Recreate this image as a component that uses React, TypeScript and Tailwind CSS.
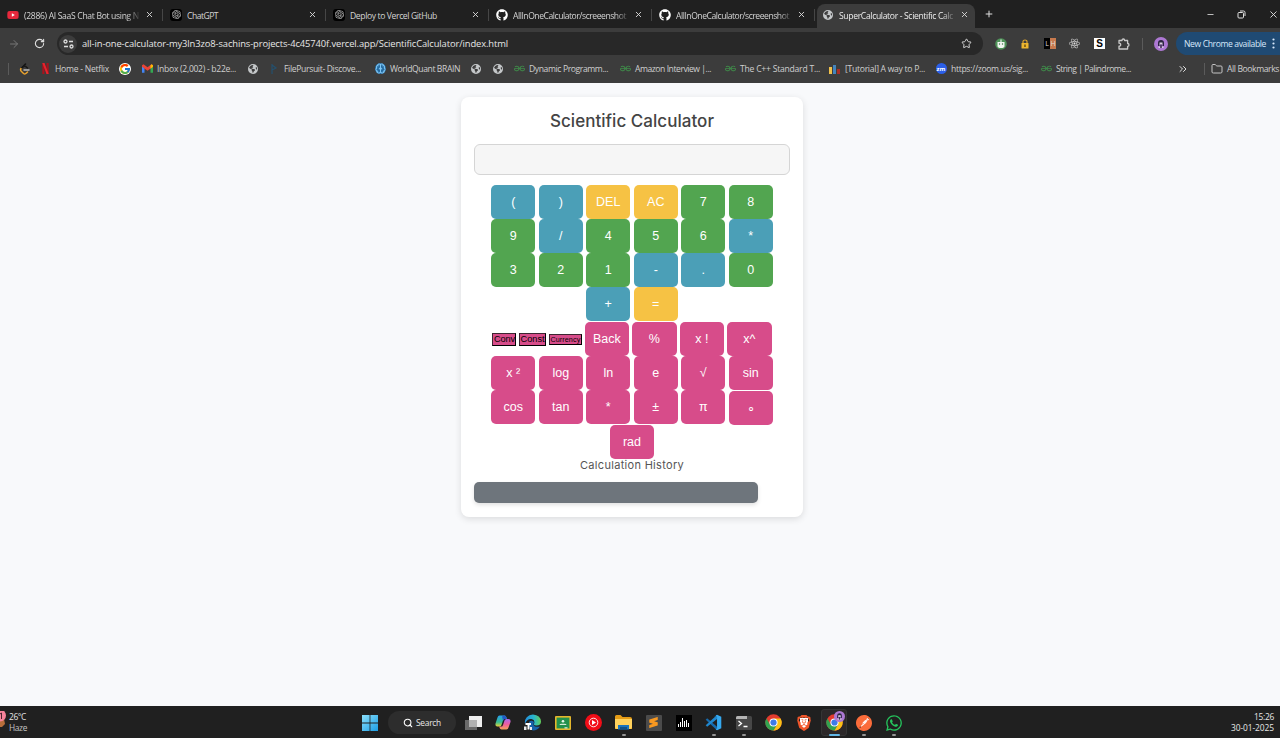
import { useLayoutEffect, useRef, useState, type ReactNode } from "react";
import { FcGoogle } from "react-icons/fc";
import { FaReact, FaGithub, FaEarthAmericas, FaWhatsapp, FaYoutube } from "react-icons/fa6";
import { SiBrave, SiGeeksforgeeks, SiOpenai, SiPostman, SiSublimetext } from "react-icons/si";
import { ChevronsRight, Folder, Minus, Plus, RotateCw, Search, Star, X, ArrowRight, Brain } from "lucide-react";

/* Single-line text whose letter spacing is tuned so that it spans `w` pixels. */
function Fit({ w, className, children }: { w: number; className?: string; children: string }) {
  const ref = useRef<HTMLSpanElement>(null);
  const [spacing, setSpacing] = useState(0);
  useLayoutEffect(() => {
    const el = ref.current;
    if (el) setSpacing((w - el.getBoundingClientRect().width) / children.length);
  }, [w, children]);
  return (
    <span ref={ref} className={`inline-block shrink-0 whitespace-pre ${className ?? ""}`} style={{ letterSpacing: `${spacing}px` }}>
      {children}
    </span>
  );
}

const Globe = () => (
  <span className="flex size-[10px] items-center justify-center rounded-full bg-[#3c3c3c] text-[#c4c7c9]">
    <FaEarthAmericas size={10} />
  </span>
);

const Gpt = () => (
  <span className="flex size-[12px] items-center justify-center rounded-[3px] bg-black text-[#c9c9c9]">
    <SiOpenai size={9} />
  </span>
);

const YouTube = () => (
  <span className="relative flex size-3 items-center justify-center text-[#e8283c]">
    <span className="absolute size-1 bg-white" />
    <FaYoutube size={12} className="relative" />
  </span>
);

type TabData = { icon: ReactNode; title: string; w: number; active?: boolean };

const tabs: TabData[] = [
  { icon: <YouTube />, title: "(2886) AI SaaS Chat Bot using N", w: 115 },
  { icon: <Gpt />, title: "ChatGPT", w: 31 },
  { icon: <Gpt />, title: "Deploy to Vercel GitHub", w: 87 },
  { icon: <FaGithub size={12} className="text-white" />, title: "AllInOneCalculator/screeenshot", w: 113 },
  { icon: <FaGithub size={12} className="text-white" />, title: "AllInOneCalculator/screeenshot", w: 113 },
  { icon: <Globe />, title: "SuperCalculator - Scientific Calc", w: 114, active: true },
];

function Tab({ icon, title, w, active }: TabData) {
  return (
    <div className={`flex h-6 shrink-0 items-center pb-[1px] ${active ? "mr-1 ml-[2px] w-[158px] rounded-t-lg bg-[#3c3c3c] pl-[5px]" : "w-[163px] pl-[7px]"}`}>
      <span className="flex w-[12px] justify-center pb-[2px]">{icon}</span>
      <span className={`ml-[5px] w-[117px] overflow-hidden pb-[2px] ${w > 100 ? "[mask-image:linear-gradient(to_right,black_88%,transparent)]" : ""}`}>
        <Fit w={w} className={`text-[8.6px] ${active ? "text-[#ececec]" : "text-[#d4d4d4]"}`}>{title}</Fit>
      </span>
      <X size={9} strokeWidth={2.4} className="mb-[3px] ml-[4px] text-[#dddddd]" />
      {!active && <span className="mb-[2px] ml-auto h-3 w-px bg-[#464646]" />}
    </div>
  );
}

const LeetCode = () => (
  <svg width="11" height="12" viewBox="0 0 22 24" fill="none" strokeLinecap="round" strokeWidth="3">
    <path d="M13 2 4 11" stroke="#111" />
    <path d="M4 11q-2 3 1 6l4 4q3 2 6-1l2-2" stroke="#eaa32c" />
    <path d="m8 8 3-2q2 0 6 4" stroke="#171717" />
    <path d="M10 14h10" stroke="#bbb" />
  </svg>
);

const Netflix = () => (
  <svg width="7" height="11" viewBox="0 0 7 12">
    <path d="M0 0h2.4v12H0zM4.6 0H7v12H4.6z" fill="#a5141d" />
    <path d="M0 0h2.4L7 12H4.6z" fill="#e9222c" />
  </svg>
);

const Gmail = () => (
  <svg width="11" height="9" viewBox="0 0 22 17">
    <path d="M0 2v15h5V7z" fill="#4285f4" />
    <path d="M22 2v15h-5V7z" fill="#34a853" />
    <path d="m0 2 3-2 8 6 8-6 3 2v3l-11 8L0 5z" fill="#ea4335" />
    <path d="m17 2 2-2 3 2v3l-5 4z" fill="#fbbc04" />
  </svg>
);

const FilePursuit = () => (
  <svg width="8" height="10" viewBox="0 0 8 10" fill="none" stroke="#24506e" strokeWidth="1.2">
    <path d="M2 0v10M2 1l4 3-4 2" />
  </svg>
);

const Bars = () => (
  <span className="flex h-[10px] w-3 items-end gap-px">
    <span className="h-[7px] w-[3px] bg-[#f0c04a]" />
    <span className="h-[9px] w-[3px] bg-[#4384bd]" />
    <span className="h-[5px] w-[3px] bg-[#a72e27]" />
  </span>
);

const World = () => (
  <span className="flex size-[11px] items-center justify-center rounded-full bg-[#24699f] text-[#7cc4f3]">
    <Brain size={11} strokeWidth={2.2} />
  </span>
);

const Zoom = () => (
  <span className="flex size-[11px] items-center justify-center rounded-full bg-[#2b5fe8] text-[6px] font-bold text-white">zm</span>
);

const Gfg = () => <SiGeeksforgeeks size={11} className="text-[#3f8a49]" />;

const bookmarks: { icon: ReactNode; text?: string; w?: number; box: string }[] = [
  { icon: <LeetCode />, box: "w-[21px]" },
  { icon: <Netflix />, text: "Home - Netflix", w: 54, box: "w-[80px]" },
  { icon: <FcGoogle size={12} className="rounded-full bg-white" />, box: "w-[22px]" },
  { icon: <Gmail />, text: "Inbox (2,002) - b22e...", w: 79, box: "w-[106px]" },
  { icon: <Globe />, box: "w-[21px]" },
  { icon: <FilePursuit />, text: "FilePursuit- Discove...", w: 77, box: "w-[106px]" },
  { icon: <World />, text: "WorldQuant BRAIN", w: 70, box: "w-[96px]" },
  { icon: <Globe />, box: "w-[22px]" },
  { icon: <Globe />, box: "w-[21px]" },
  { icon: <Gfg />, text: "Dynamic Programm...", w: 79, box: "w-[106px]" },
  { icon: <Gfg />, text: "Amazon Interview |...", w: 76, box: "w-[105px]" },
  { icon: <Gfg />, text: "The C++ Standard T...", w: 80, box: "w-[105px]" },
  { icon: <Bars />, text: "[Tutorial] A way to P...", w: 80, box: "w-[106px]" },
  { icon: <Zoom />, text: "https://zoom.us/sig...", w: 77, box: "w-[105px]" },
  { icon: <Gfg />, text: "String | Palindrome...", w: 75, box: "w-[138px]" },
];

const Avatar = ({ small }: { small?: boolean }) => (
  <svg width={small ? 11 : 14} height={small ? 11 : 14} viewBox="0 0 14 14">
    <circle cx="7" cy="7" r="7" fill="#ad78d3" />
    <path d="M4 9V6q0-3 3-3t3 3v3H8.500V7h-3v2z" fill="#2b2440" />
    <path d="M5.5 5.500h3v2h-3zM4.500 9.500h5V11h-5z" fill="#d9d0e0" />
    <path d="M6.200 7.500h1.600V11H6.200z" fill="#3d2f50" />
  </svg>
);

function Browser() {
  return (
    <header className="bg-[#3c3c3c] text-[#dfdfdf]">
      <div className="flex h-7 items-end bg-[#202020]">
        {tabs.map((t, i) => <Tab key={i} {...t} />)}
        <div className="flex h-7 flex-1 items-center pl-[5px]">
          <Plus size={10} strokeWidth={2.4} />
          <span className="flex-1" />
          <Minus size={9} strokeWidth={2.2} className="mr-[22px]" />
          <svg width="9" height="9" viewBox="0 0 9 9" fill="none" stroke="currentColor" className="mr-[22px]">
            <rect x="1" y="2.500" width="5.500" height="5.500" rx="1" /><path d="M3 1h3.500Q8 1 8 2.500V6" />
          </svg>
          <X size={11} strokeWidth={2} className="mr-[1px]" />
        </div>
      </div>
      <div className="mt-[3px] flex h-[25px] items-center">
        <ArrowRight size={12} className="ml-2 text-[#777777]" />
        <RotateCw size={11} strokeWidth={2.4} className="ml-[14px]" />
        <div className="ml-3 flex h-[23px] w-[926px] items-center rounded-full bg-[#282828] pl-[2px] pr-[11px]">
          <span className="flex size-[18px] items-center justify-center rounded-full bg-[#3c3c3c]">
            <svg width="11" height="10" viewBox="0 0 11 10" fill="none" stroke="#dedede" strokeWidth="1.3">
              <circle cx="2.5" cy="2.5" r="1.5" /><path d="M6 2.5h4M1 7.5h4" /><circle cx="8.5" cy="7.5" r="1.5" />
            </svg>
          </span>
          <Fit w={426} className="ml-[5px] text-[9.4px] text-[#e6e6e6]">all-in-one-calculator-my3ln3zo8-sachins-projects-4c45740f.vercel.app/ScientificCalculator/index.html</Fit>
          <Star size={11} strokeWidth={2} className="ml-auto" />
        </div>
        <span className="ml-[12px] flex size-3 items-center justify-center">
          <svg width="12" height="12" viewBox="0 0 12 12">
            <circle cx="6" cy="6" r="5.8" fill="#4f9359" />
            <path d="M2.5 4h7v4q0 2-3.5 2T2.5 8z" fill="#f1f6f1" />
            <path d="M6 1.5V4" stroke="#fff" /><circle cx="4.5" cy="6" r=".7" fill="#397442" /><circle cx="7.5" cy="6" r=".7" fill="#397442" />
          </svg>
        </span>
        <svg width="8" height="10" viewBox="0 0 8 10" className="ml-[14px]">
          <path d="M2 4V2.500Q2 1 4 1t2 1.500V4" fill="none" stroke="#e0a52b" strokeWidth="1.200" />
          <rect x=".5" y="4" width="7" height="5.500" rx=".6" fill="#edb52f" /><path d="M3.400 5.500h1.200v2.500H3.400z" fill="#4a3508" />
        </svg>
        <span className="ml-[15px] flex h-[11px] w-3 text-center text-[7px] leading-[11px]">
          <span className="w-1/2 bg-black">L</span><span className="w-1/2 bg-[#c87a4e]">H</span>
        </span>
        <FaReact size={11} className="ml-[13px]" />
        <span className="ml-[14px] size-[11px] bg-white text-center font-['Liberation_Sans'] text-[10px] font-bold leading-[11px] text-black">S</span>
        <svg width="12" height="12" viewBox="0 0 12 12" fill="none" stroke="#c9c9c9" strokeWidth="1.300" strokeLinejoin="round" className="ml-[13px]">
          <path d="M1 2.500h3Q4 1 5.300 1t1.300 1.500h3v3Q11 5.500 11 6.900T9.600 8.300V11H1V8.200q1.700 0 1.700-1.500T1 5.200z" />
        </svg>
        <span className="ml-3 h-3 w-px bg-[#5b5b5b]" />
        <span className="ml-[11px]"><Avatar /></span>
        <div className="ml-[8px] flex h-[23px] flex-1 items-center rounded-l-full bg-[#1f4a73] pl-2 text-[#d7e8fb]">
          <Fit w={82} className="text-[8.6px]">New Chrome available</Fit>
          <svg width="3" height="11" viewBox="0 0 3 11" className="ml-[6px]" fill="currentColor">
            <circle cx="1.5" cy="1.5" r="1.1" /><circle cx="1.5" cy="5.5" r="1.1" /><circle cx="1.5" cy="9.5" r="1.1" />
          </svg>
        </div>
      </div>
      <div className="flex h-[27px] items-center pb-[2px]">
        <span className="ml-2 mr-[9px] h-3 w-px bg-[#5b5b5b]" />
        {bookmarks.map((b, i) => (
          <span key={i} className={`flex shrink-0 items-center gap-1 ${b.box}`}>
            <span className="flex w-3 shrink-0 justify-center">{b.icon}</span>
            {b.text && <Fit w={b.w!} className="text-[8.6px] text-[#cfcfcf]">{b.text}</Fit>}
          </span>
        ))}
        <ChevronsRight size={12} strokeWidth={2} className="-ml-px shrink-0" />
        <span className="ml-[15px] h-3 w-px shrink-0 bg-[#5b5b5b]" />
        <Folder size={12} strokeWidth={2} className="ml-[6px] shrink-0 text-[#c5c5c5]" />
        <Fit w={52} className="ml-1 text-[8.6px] text-[#cfcfcf]">All Bookmarks</Fit>
      </div>
    </header>
  );
}

type KeyColor = "b" | "y" | "g" | "p";
const keyBg: Record<KeyColor, string> = { b: "bg-[#4b9fb7]", y: "bg-[#f6c244]", g: "bg-[#52a550]", p: "bg-[#d74c8a]" };

function Key({ label, color }: { label: string; color: KeyColor }) {
  return (
    <button className={`h-[34px] w-[44.4px] rounded-[5px] font-['Liberation_Sans'] text-[12.5px] leading-[34px] text-white ${keyBg[color]} ${label === "∘" ? "mt-[0.8px]" : ""}`}>
      {label}
    </button>
  );
}

const upper: [string, KeyColor][][] = [
  [["(", "b"], [")", "b"], ["DEL", "y"], ["AC", "y"], ["7", "g"], ["8", "g"]],
  [["9", "g"], ["/", "b"], ["4", "g"], ["5", "g"], ["6", "g"], ["*", "b"]],
  [["3", "g"], ["2", "g"], ["1", "g"], ["-", "b"], [".", "b"], ["0", "g"]],
  [["+", "b"], ["=", "y"]],
];
const lower = [
  ["x ²", "log", "ln", "e", "√", "sin"],
  ["cos", "tan", "*", "±", "π", "∘"],
];

const Row = ({ children }: { children: ReactNode }) => <div className="flex h-[34.15px] justify-center gap-[3.1px]">{children}</div>;

const miniKey = "flex items-center justify-center overflow-hidden border border-r-[1.5px] border-b-[1.5px] border-t-[#3d2631] border-l-[#3d2631] border-r-black border-b-black bg-[#d74c8a] whitespace-nowrap text-black";

function Calculator() {
  return (
    <section className="mx-auto h-[420px] w-[342px] rounded-lg bg-white px-[13px] pt-[13px] shadow-[0_2px_7px_rgba(0,0,0,0.12)]">
      <h1 className="flex h-[22px] items-center justify-center font-[Inter] font-medium text-[#444444]">
        <Fit w={164} className="text-[17px]">Scientific Calculator</Fit>
      </h1>
      <div className="mt-3 h-[31px] rounded-[6px] border border-[#d5d5d5] bg-[#f6f6f6]" />
      <div className="mt-[10px]">
        {upper.map((row, i) => (
          <Row key={i}>{row.map(([label, color], j) => <Key key={j} label={label} color={color} />)}</Row>
        ))}
        <Row>
          <div className="mr-[-0.5px] flex items-center gap-[2.6px] pt-[2px] font-['Liberation_Sans']">
            <div className={`h-[13px] w-[24px] text-[9.2px] leading-[11px] ${miniKey}`}><Fit w={21}>Conv</Fit></div>
            <div className={`h-[13px] w-[27px] text-[9.2px] leading-[11px] ${miniKey}`}><Fit w={24}>Const</Fit></div>
            <div className={`h-[11px] w-[33.5px] text-[7.2px] leading-[9px] ${miniKey}`}><Fit w={30}>Currency</Fit></div>
          </div>
          {["Back", "%", "x !", "x^"].map((k) => <Key key={k} label={k} color="p" />)}
        </Row>
        {lower.map((row, i) => (
          <Row key={i}>{row.map((k, j) => <Key key={j} label={k} color="p" />)}</Row>
        ))}
        <div className="flex h-[35px] justify-center pt-[0.8px]"><Key label="rad" color="p" /></div>
      </div>
      <p className="relative flex h-[13px] items-center justify-center font-[Inter] text-[#555555]">
        <Fit w={104} className="text-[11px]">Calculation History</Fit>
      </p>
      <div className="mt-[10px] h-[21px] w-[284px] rounded-[5px] bg-[#6e757c] shadow-[0_2px_4px_rgba(0,0,0,0.12)]" />
    </section>
  );
}

const Chrome = () => (
  <svg width="17" height="17" viewBox="0 0 48 48">
    <circle cx="24" cy="24" r="23" fill="#e33b2e" />
    <path d="M4 12.5A23 23 0 0 0 24 47l10-17.5-20 0z" fill="#32a350" />
    <path d="M24 47a23 23 0 0 0 20-34.5H24L34 30z" fill="#fbc116" />
    <circle cx="24" cy="24" r="11.5" fill="#fff" /><circle cx="24" cy="24" r="8.8" fill="#3d7be8" />
  </svg>
);

const Windows = () => (
  <svg width="16" height="16" viewBox="0 0 16 16">
    <defs><linearGradient id="win" x2="1" y2="1"><stop stopColor="#8be0fb" /><stop offset="1" stopColor="#1c9de4" /></linearGradient></defs>
    <path d="M0 0h7.6v7.6H0zM8.4 0H16v7.6H8.4zM0 8.4h7.6V16H0zM8.4 8.4H16V16H8.4z" fill="url(#win)" />
  </svg>
);

const TaskView = () => (
  <svg width="17" height="16" viewBox="0 0 17 16">
    <path d="M4 1h13v11H4z" fill="#eeeeee" /><path d="M0 5h12v10H0z" fill="#777" fillOpacity=".85" />
    <path d="M4 5h8v7H4z" fill="#b1b1b1" />
  </svg>
);

const Copilot = () => (
  <svg width="16" height="15" viewBox="0 0 32 30">
    <defs>
      <linearGradient id="cpa" x2="0" y2="1"><stop stopColor="#279ef0" /><stop offset=".6" stopColor="#37bd91" /><stop offset="1" stopColor="#e8d33b" /></linearGradient>
      <linearGradient id="cpb" x2="0" y2="1"><stop stopColor="#a86af0" /><stop offset=".5" stopColor="#ef5c9d" /><stop offset="1" stopColor="#f5a158" /></linearGradient>
    </defs>
    <path d="M9 1h10q3 0 4 4l1 3h-5q-2 0-3 3l-3 9q-1 3-4 3H5q-5 0-4-6L5 5q1-4 4-4z" fill="url(#cpa)" />
    <path d="M23 29H13q-3 0-4-4l-1-2h5q2 0 3-3l3-9q1-3 4-3h4q5 0 4 6l-4 11q-1 4-4 4z" fill="url(#cpb)" />
    <path d="M18 1q4 0 5 4l1 3h-5l-3 3-2-8z" fill="#235ac5" />
  </svg>
);

const Edge = () => (
  <svg width="18" height="17" viewBox="0 0 36 34">
    <defs><linearGradient id="edge" x2="1"><stop stopColor="#238cdb" /><stop offset=".55" stopColor="#28b5cc" /><stop offset="1" stopColor="#64ce57" /></linearGradient></defs>
    <path d="M2 20A16 16 0 0 1 18 1q15 1 16 14 0 8-9 8-6 0-5-3 3-8-5-10Q6 9 2 20z" fill="url(#edge)" />
    <path d="M10 16q5-5 10 0-5 12 12 9-5 8-14 8-10-2-8-17z" fill="#1762aa" />
    <path d="M3 18h11v4h-3v9H7v-9H3z" fill="#fff" />
    <path d="M0 25h5v7H0zM12 26h4v6h-4z" fill="#e8e8e8" />
  </svg>
);

const Classroom = () => (
  <svg width="16" height="14" viewBox="0 0 16 14">
    <rect width="16" height="14" rx="1" fill="#e5b72c" /><path d="M1.6 1.6h12.8v10.8H1.6z" fill="#23914d" />
    <circle cx="8" cy="5.3" r="1.3" fill="#e8f5e9" /><path d="M4.500 9q0-1.200 2-1.200h3q2 0 2 1.200z" fill="#d5ead8" />
    <path d="M9.5 11.4h3v1h-3z" fill="#fff" />
  </svg>
);

const Music = () => (
  <svg width="17" height="17" viewBox="0 0 17 17">
    <circle cx="8.5" cy="8.5" r="8.5" fill="#f20d17" /><circle cx="8.5" cy="8.5" r="4.3" fill="none" stroke="#fff" strokeWidth=".9" />
    <path d="m7 6 4 2.5-4 2.5z" fill="#fff" />
  </svg>
);

const Explorer = () => (
  <svg width="17" height="15" viewBox="0 0 17 15">
    <path d="M0 1.5Q0 0 1.5 0h4l2 2H15q2 0 2 2v10H0z" fill="#e59c16" /><path d="M0 4h17v8q0 2-2 2H2q-2 0-2-2z" fill="#ffd25d" />
    <path d="M3 10h11v4.5H3z" fill="#1873be" /><path d="M5 12h7v2.5H5z" fill="#125085" />
  </svg>
);

const Sublime = () => (
  <span className="flex size-4 items-center justify-center rounded-[1px] bg-[#4b4b4b] text-[#f89820]"><SiSublimetext size={11} /></span>
);

const Equalizer = () => (
  <span className="flex h-4 w-4 items-end justify-center gap-[0.5px] bg-black pb-[4px]">
    <i className="h-[3px] w-[1.5px] bg-white" /><i className="h-[5px] w-[1.5px] bg-white" /><i className="h-[9px] w-[1.5px] bg-white" />
    <i className="h-[6px] w-[1.5px] bg-white" /><i className="h-[7px] w-[1.5px] bg-white" /><i className="h-[4px] w-[1.5px] bg-white" />
  </span>
);

const VsCode = () => (
  <svg width="17" height="17" viewBox="0 0 24 24">
    <path d="m1 8 2-2 14 12v4l-2-1z" fill="#176bad" />
    <path d="m1 16 2 2L17 7V2l-2 1z" fill="#2088cf" />
    <path d="m17 1 6 3v16l-6 3-2-1 2-2V4l-2-2z" fill="#35a9ef" />
  </svg>
);

const Terminal = () => (
  <svg width="16" height="14" viewBox="0 0 16 14">
    <rect width="16" height="14" rx="1.5" fill="#474747" /><path d="M0 3V1.5Q0 0 1.5 0H11v3z" fill="#b5b5b5" />
    <path d="m2.5 5 3 2.5-3 2.5M7.5 10.5h4" fill="none" stroke="#fff" strokeWidth="1.3" />
  </svg>
);

const Brave = () => (
  <span className="relative flex items-center justify-center text-[#f1562b]">
    <span className="absolute h-[10px] w-[8px] bg-white" /><SiBrave size={16} className="relative" />
  </span>
);

const Postman = () => (
  <span className="relative flex items-center justify-center text-[#fb6c3a]">
    <span className="absolute size-[11px] rounded-full bg-white" /><SiPostman size={16} className="relative" />
  </span>
);

const ProfileChrome = () => (
  <span className="relative flex h-[27px] w-[26px] items-center justify-center rounded-[3px] border border-[#353535] bg-[#2c2829]">
    <Chrome />
    <span className="absolute right-[1px] top-[1px]"><Avatar small /></span>
  </span>
);

const apps: { icon: ReactNode; mark?: "dot" | "bar" }[] = [
  { icon: <TaskView /> }, { icon: <Copilot /> }, { icon: <Edge /> }, { icon: <Classroom /> }, { icon: <Music /> },
  { icon: <Explorer />, mark: "dot" }, { icon: <Sublime /> }, { icon: <Equalizer /> },
  { icon: <VsCode />, mark: "dot" }, { icon: <Terminal />, mark: "dot" },
  { icon: <Chrome /> }, { icon: <Brave /> }, { icon: <ProfileChrome />, mark: "bar" },
  { icon: <Postman />, mark: "dot" }, { icon: <FaWhatsapp size={18} className="text-[#25c45c]" />, mark: "dot" },
];

function Taskbar() {
  return (
    <footer className="flex h-8 bg-[#202020] text-[#e8e8e8]">
      <div className="flex w-[362px] pt-[5px]">
        <svg width="9" height="22" viewBox="0 0 9 22" className="shrink-0">
          <path d="M0 8h4l1 5-3 3H0z" fill="#b76e3b" /><circle cx="0" cy="4.5" r="6" fill="#f5829b" />
          <path d="m0 3 1.5-1v6" fill="none" stroke="#4a2530" strokeWidth="1" />
        </svg>
        <div className="flex flex-col text-[8.4px] leading-[11px]">
          <Fit w={18}>26°C</Fit>
          <Fit w={18} className="text-[#c4c4c4]">Haze</Fit>
        </div>
      </div>
      <div className="flex h-8 items-center pt-[1px]">
        <Windows />
        <div className="ml-[10px] mr-[2px] flex h-[23px] w-[68px] items-center rounded-full bg-[#2d2d2d] pl-[15px]">
          <Search size={10} strokeWidth={2.6} className="text-white" />
          <Fit w={25} className="ml-[3px] text-[8.4px]">Search</Fit>
        </div>
        {apps.map((a, i) => (
          <span key={i} className="relative flex h-8 w-[30.1px] items-center justify-center">
            {a.icon}
            {a.mark && <span className={`absolute bottom-[3px] h-[2px] rounded-full ${a.mark === "bar" ? "w-[11px] bg-[#62b7e6]" : "w-1 bg-[#959595]"}`} />}
          </span>
        ))}
      </div>
      <div className="ml-auto flex flex-col items-end pr-[6px] pt-[5px] text-[8.4px] leading-[11px]">
        <Fit w={20}>15:26</Fit>
        <Fit w={43}>30-01-2025</Fit>
      </div>
    </footer>
  );
}

export default function App() {
  return (
    <div className="flex h-[738px] w-[1280px] flex-col overflow-hidden bg-[#f8f9fb] font-['Open_Sans',sans-serif] leading-[12px]">
      <Browser />
      <main className="flex-1 pt-[14px] pr-4">
        <Calculator />
      </main>
      <Taskbar />
    </div>
  );
}
